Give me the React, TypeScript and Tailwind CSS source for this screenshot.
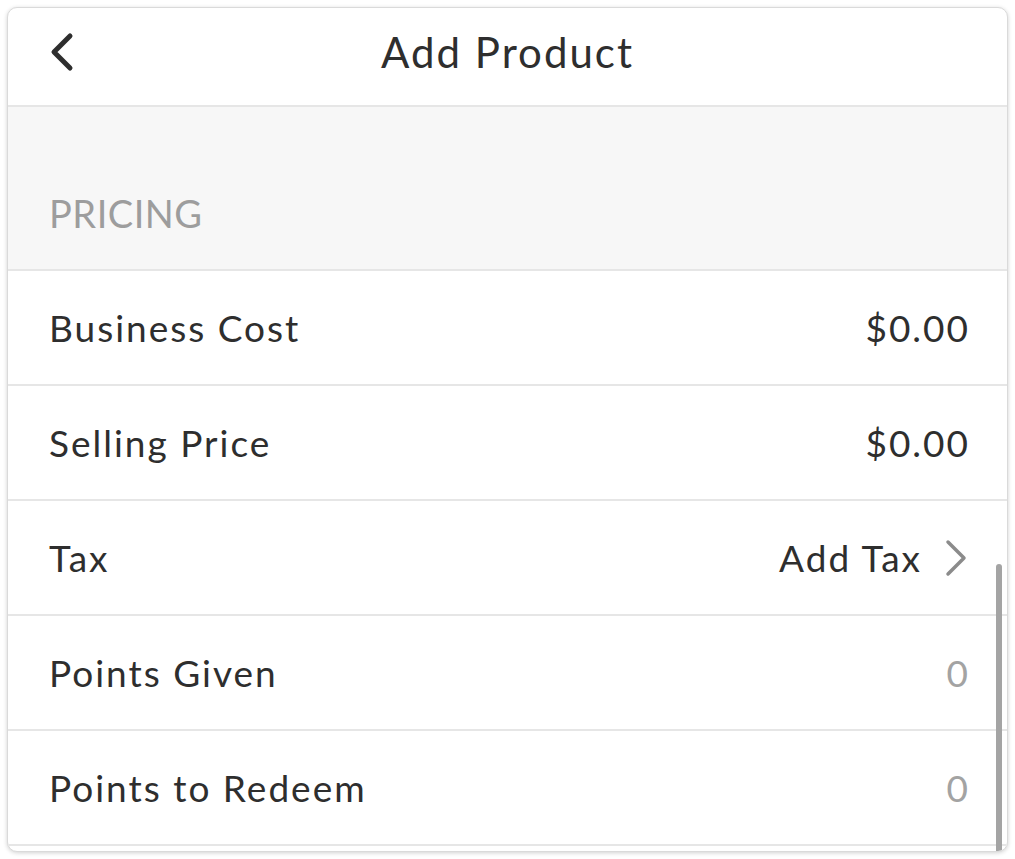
import React from 'react';

type Row = {
  label: string;
  value: string;
  muted?: boolean;
  chevron?: boolean;
};

const rows: Row[] = [
  { label: 'Business Cost', value: '$0.00' },
  { label: 'Selling Price', value: '$0.00' },
  { label: 'Tax', value: 'Add Tax', chevron: true },
  { label: 'Points Given', value: '0', muted: true },
  { label: 'Points to Redeem', value: '0', muted: true },
];

const font = { fontFamily: 'Lato, "Open Sans", sans-serif' };

export default function App() {
  return (
    <div className="w-[1015px] h-[859px] bg-white p-[7px]" style={font}>
      <div className="relative h-[845px] bg-white rounded-[10px] border border-[#dadada] shadow-[0_1px_4px_rgba(0,0,0,0.18)] overflow-hidden">
        <div className="h-[99px] flex items-center justify-center relative border-b-2 border-[#e6e6e6]">
          <svg className="absolute left-[40px] top-[24px]" width="30" height="42" viewBox="0 0 30 42">
            <path d="M22 4 L6 20 L22 36" fill="none" stroke="#2e2e2e" strokeWidth="5" strokeLinecap="round" strokeLinejoin="round" />
          </svg>
          <h1 className="text-[42px] leading-none text-[#2e2e2e] tracking-[2px] -mt-[10px]">Add Product</h1>
        </div>
        <div className="h-[164px] bg-[#f7f7f7] flex items-end px-[41px] pb-[37px] border-b-2 border-[#e6e6e6]">
          <span className="text-[38px] leading-none text-[#9d9d9d] tracking-[0.5px]">PRICING</span>
        </div>
        {rows.map((r) => (
          <div
            key={r.label}
            className="h-[115px] flex items-center justify-between pl-[41px] pr-[39px] border-b-2 border-[#e6e6e6]"
          >
            <span className="text-[37px] text-[#2e2e2e] tracking-[2px]">{r.label}</span>
            <div className="flex items-center">
              <span
                className={`text-[37px] tracking-[2px] ${r.muted ? 'text-[#a3a3a3]' : 'text-[#2e2e2e]'} ${
                  r.chevron ? 'mr-[22px]' : '-mr-[2px]'
                }`}
              >
                {r.value}
              </span>
              {r.chevron && (
                <svg width="24" height="38" viewBox="0 0 24 38">
                  <path d="M4 3 L20 19 L4 35" fill="none" stroke="#8b8b8b" strokeWidth="3.5" strokeLinecap="round" strokeLinejoin="round" />
                </svg>
              )}
            </div>
          </div>
        ))}
        <div className="absolute right-[5px] top-[556px] w-[6px] h-[300px] bg-[#a4a4a4] rounded-full" />
      </div>
    </div>
  );
}
